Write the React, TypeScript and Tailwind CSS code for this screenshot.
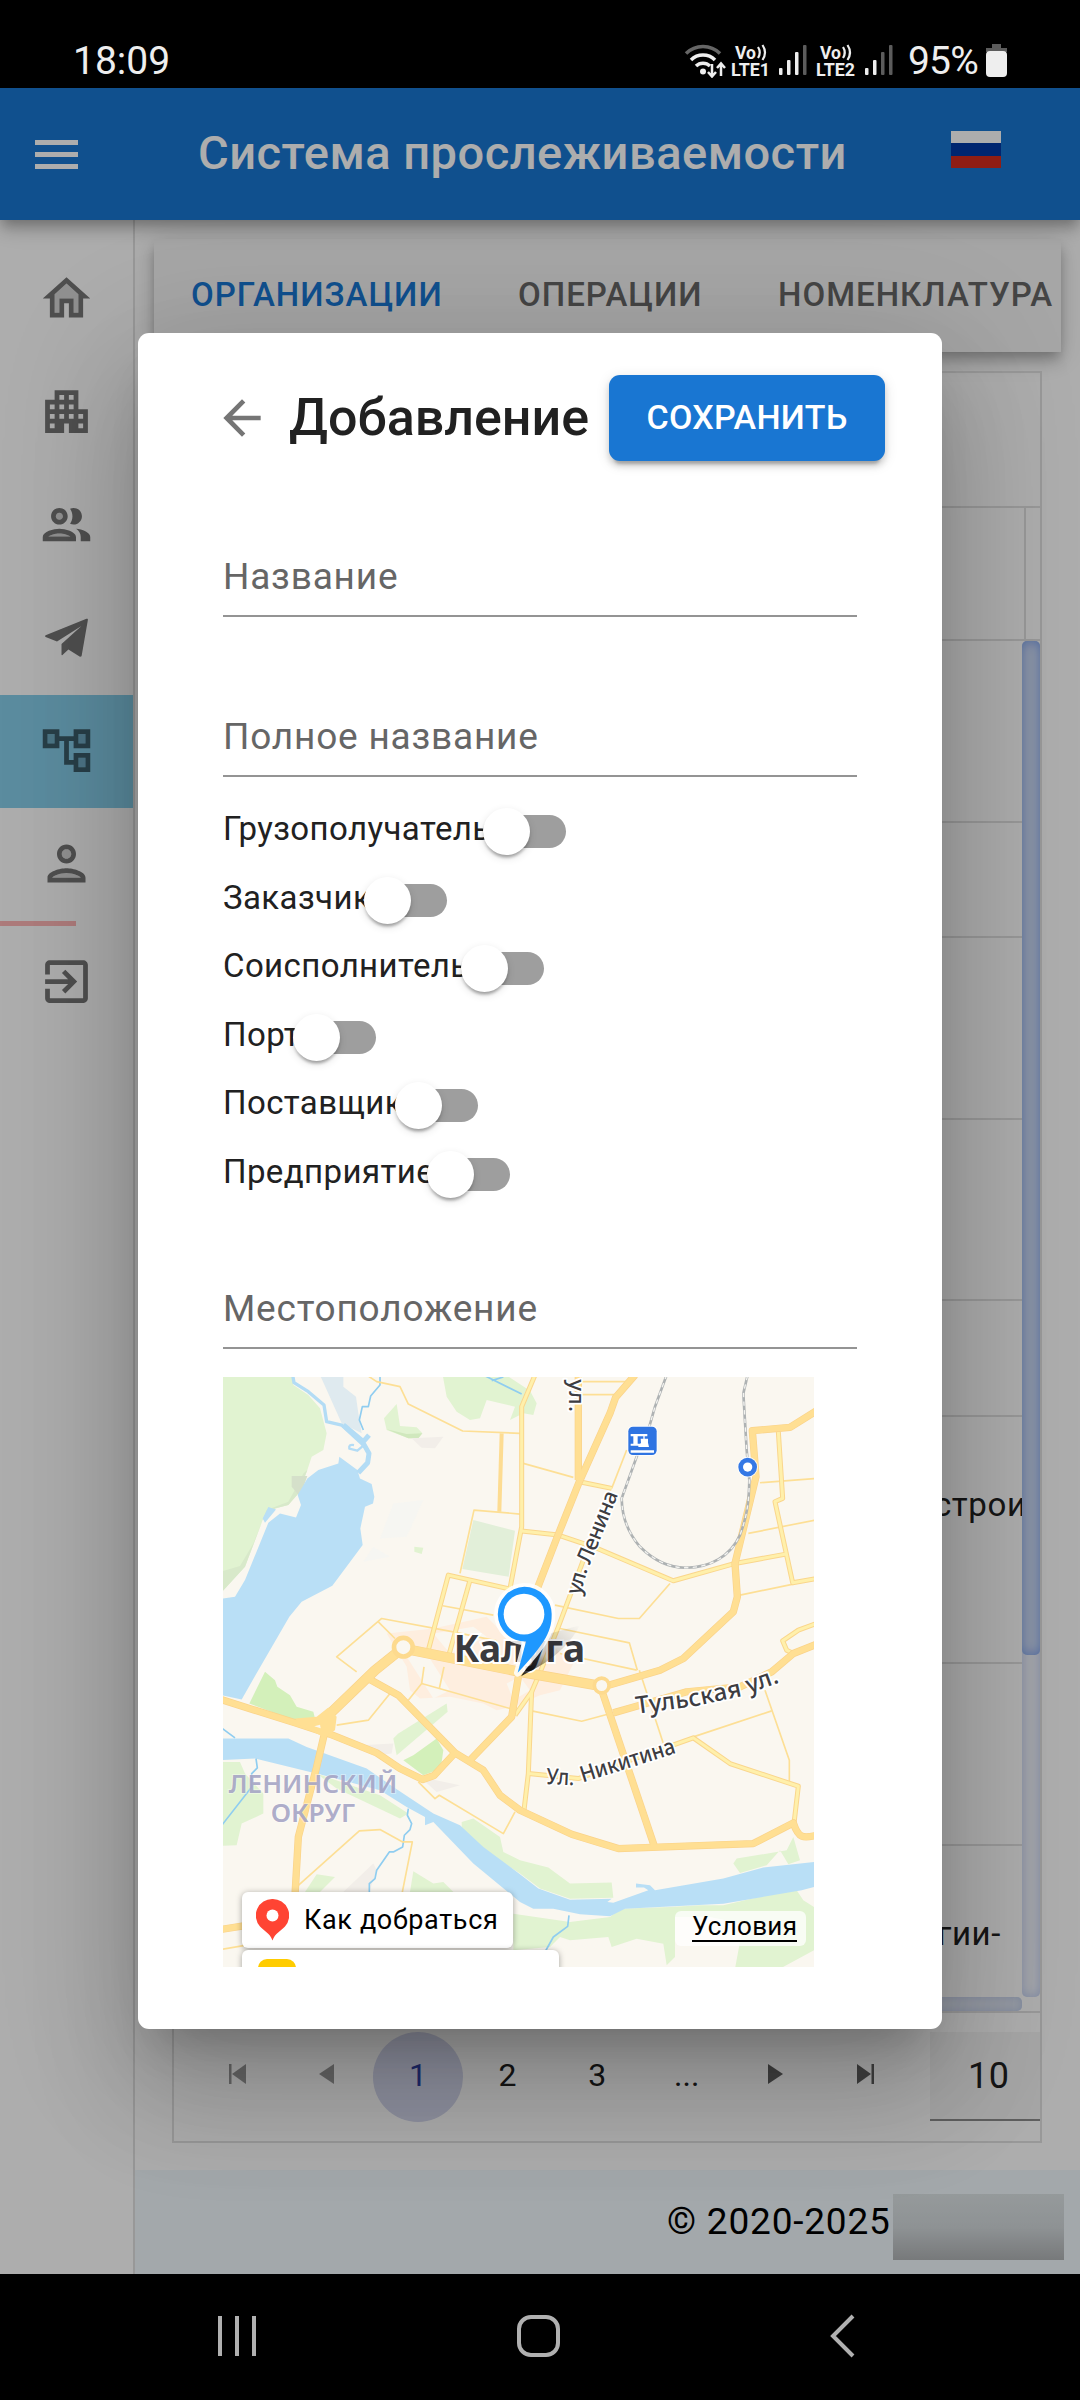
import React from "react";

const navIcons: { main: string; soft?: string; divider?: boolean; active?: boolean }[] = [
  {
    main: "M12 3L2 12h3v8h6v-6h2v6h6v-8h3L12 3zm5 15h-2v-6H9v6H7v-7.81l5-4.5 5 4.5V18z",
    soft: "M7 10.19V18h2v-6h6v6h2v-7.81l-5-4.5z",
  },
  {
    main: "M17 11V3H7v4H3v14h8v-4h2v4h8V11h-4zM7 19H5v-2h2v2zm0-4H5v-2h2v2zm0-4H5V9h2v2zm4 4H9v-2h2v2zm0-4H9V9h2v2zm0-4H9V5h2v2zm4 8h-2v-2h2v2zm0-4h-2V9h2v2zm0-4h-2V5h2v2zm4 12h-2v-2h2v2zm0-4h-2v-2h2v2z",
  },
  {
    main: "M9 13.75c-2.34 0-7 1.17-7 3.5V19h14v-1.75c0-2.33-4.66-3.5-7-3.5zM4.34 17c.84-.58 2.87-1.25 4.66-1.25s3.82.67 4.66 1.25H4.34zM9 12c1.93 0 3.5-1.57 3.5-3.5S10.93 5 9 5 5.5 6.57 5.5 8.5 7.07 12 9 12zm0-5c.83 0 1.5.67 1.5 1.5S9.83 10 9 10s-1.5-.67-1.5-1.5S8.17 7 9 7zm7.04 6.81c1.16.84 1.96 1.96 1.96 3.44V19h4v-1.75c0-2.02-3.5-3.17-5.96-3.44zM15 12c1.93 0 3.5-1.57 3.5-3.5S16.93 5 15 5c-.54 0-1.04.13-1.5.35.63.89 1 1.98 1 3.15s-.37 2.26-1 3.15c.46.22.96.35 1.5.35z",
    soft: "M4.34 17h9.32c-.84-.58-2.87-1.25-4.66-1.25S5.18 16.42 4.34 17zM10.5 8.5a1.5 1.5 0 1 0-3 0 1.5 1.5 0 0 0 3 0z",
  },
  {
    main: "M21 4.6c.1-.5-.2-.6-.6-.5L3.2 11.1c-.3.2-.3.6 0 .7L8 13.7 18.3 7.2 9.9 14.7v4.5c0 .3.2.4.4.2L12.8 17.1l4.7 2.9c.4.2.8.1.9-.4z",
  },
  {
    main: "M22 11V3h-7v3H9V3H2v8h7V8h2v10h4v3h7v-8h-7v3h-2V8h2v3h7zM7 9H4V5h3v4zm10 6h3v4h-3v-4zm0-10h3v4h-3V5z",
    soft: "M4 5h3v4H4zM17 5h3v4h-3zM17 15h3v4h-3z",
    active: true,
  },
  {
    main: "M12 12c2.21 0 4-1.79 4-4s-1.79-4-4-4-4 1.79-4 4 1.79 4 4 4zm0-6c1.1 0 2 .9 2 2s-.9 2-2 2-2-.9-2-2 .9-2 2-2zm0 8c-2.67 0-8 1.34-8 4v2h16v-2c0-2.66-5.33-4-8-4zm6 4H6.01c.2-.72 3.3-2 5.99-2s5.8 1.29 6 2z",
    soft: "M12 16c-2.69 0-5.77 1.28-6 2h12c-.2-.71-3.3-2-6-2zM14 8a2 2 0 1 0-4 0 2 2 0 0 0 4 0z",
    divider: true,
  },
  {
    main: "M10.09 15.59L11.5 17l5-5-5-5-1.41 1.41L12.67 11H3v2h9.67l-2.58 2.59zM19 3H5c-1.11 0-2 .9-2 2v4h2V5h14v14H5v-4H3v4c0 1.1.89 2 2 2h14c1.1 0 2-.9 2-2V5c0-1.1-.9-2-2-2z",
  },
];

const paperShadow =
  "shadow-[0_6px_11px_-3px_rgba(0,0,0,0.2),0_11px_14px_0_rgba(0,0,0,0.14),0_3px_28px_0_rgba(0,0,0,0.12)]";

function VoLte({ label }: { label: string }) {
  return (
    <svg
      className="overflow-visible"
      width="42"
      height="36"
      viewBox="0 0 42 36"
      fill="#eee"
      fontFamily="Roboto"
      fontWeight="700"
    >
      <text x="4" y="14.5" fontSize="17.5" textLength="21" lengthAdjust="spacingAndGlyphs">Vo</text>
      <g fill="none" stroke="#eee" strokeWidth="2.2">
        <path d="M27 3q3.5 5.5 0 11M31.5 1q5 7.5 0 15" />
      </g>
      <text x="0" y="32" fontSize="18" textLength="39" lengthAdjust="spacingAndGlyphs">{label}</text>
    </svg>
  );
}

function Signal({ level }: { level: number }) {
  return (
    <svg width="30" height="32" viewBox="0 0 30 32">
      {[7, 15, 23, 30].map((h, i) => (
        <rect key={i} x={i * 8} y={31 - h} width="3.5" height={h} rx="1" fill={i < level ? "#eee" : "#5c5c5c"} />
      ))}
    </svg>
  );
}

function StatusBar() {
  return (
    <div className="flex h-[88px] shrink-0 items-start bg-black pl-[73px] font-['Roboto'] text-[#eeeeee]">
      <div className="w-[97px] pt-[38px] text-[39px] leading-[46px]">18:09</div>
      <div className="ml-[514px] flex items-start">
        <svg className="mt-[44px]" width="44" height="34" viewBox="0 0 44 34" fill="none">
          <g strokeWidth="3.5">
            <path d="M2 9.500A24 24 0 0 1 36 9.500" stroke="#666" />
            <path d="M7 16A17 17 0 0 1 31 16" stroke="#eee" />
            <path d="M12 22A10 10 0 0 1 26 22" stroke="#eee" />
          </g>
          <circle cx="19" cy="27.5" r="3" fill="#eee" />
          <path d="M28 20v12M24 28l4 4.5 4-4.5M37 32V20M33 24l4-4.5 4 4.5" stroke="#eee" strokeWidth="2.5" />
        </svg>
        <div className="mt-[44px] ml-[3px] w-[42px]"><VoLte label="LTE1" /></div>
        <div className="mt-[44px] ml-[6px]"><Signal level={3} /></div>
        <div className="mt-[44px] ml-[7px] w-[42px]"><VoLte label="LTE2" /></div>
        <div className="mt-[44px] ml-[7px]"><Signal level={2} /></div>
        <div className="ml-[13px] w-[76px] pt-[38px] text-[39px] leading-[46px] tracking-[-0.8px]">95%</div>
        <svg className="mt-[44px] ml-[2px]" width="21" height="33" viewBox="0 0 21 33">
          <path d="M6 0h9v4h6v4H0V4h6z" fill="#5c5c5c" />
          <rect y="7" width="21" height="26" rx="4" fill="#eee" />
        </svg>
      </div>
    </div>
  );
}

function Header() {
  return (
    <header className={"relative z-10 flex h-[132px] shrink-0 items-start bg-[#1976d2] " + paperShadow}>
      <div className="mt-[52px] ml-[35px] flex w-[43px] flex-col gap-[7px]">
        <div className="h-[5px] bg-white" />
        <div className="h-[5px] bg-white" />
        <div className="h-[5px] bg-white" />
      </div>
      <h1 className="mt-[37px] ml-[120px] w-[753px] text-[47px] leading-[56px] font-medium tracking-[0.5px] whitespace-nowrap text-white">
        Система прослеживаемости
      </h1>
      <div className="mt-[43px] flex h-[37px] w-[50px] flex-col">
        <div className="flex-1 bg-white" />
        <div className="flex-1 bg-[#0039a6]" />
        <div className="flex-1 bg-[#d52b1e]" />
      </div>
    </header>
  );
}

function Sidebar() {
  return (
    <aside className="w-[135px] shrink-0 border-r-2 border-[#e0e0e0] pt-[23px]">
      {navIcons.map((it, i) => (
        <div key={i}>
          <div className={"flex h-[113px] items-center justify-center pr-[1px] pb-[2px] " + (it.active ? "bg-[#87ceeb]" : "")}>
            <svg width="57" height="57" viewBox="0 0 24 24" fill={it.active ? "#3c5d6a" : "#757575"}>
              {it.soft && <path d={it.soft} opacity="0.3" />}
              <path d={it.main} />
            </svg>
          </div>
          {it.divider && <div className="h-[5px] w-[76px] bg-[#ffb6b6]" />}
        </div>
      ))}
    </aside>
  );
}

const rows: { h: string; text?: string }[] = [
  { h: "h-[182px]" },
  { h: "h-[115px]" },
  { h: "h-[182px]" },
  { h: "h-[181px]" },
  { h: "h-[116px]" },
  { h: "h-[247px]", text: "строи" },
  { h: "h-[182px]" },
  { h: "h-[180px]", text: "гии-" },
];

const pages = ["first", "prev", "1", "2", "3", "...", "next", "last"];

function PageIcon({ kind }: { kind: string }) {
  const left = kind === "first" || kind === "prev";
  const bar = kind === "first" || kind === "last";
  return (
    <svg
      width="18"
      height="20"
      viewBox="0 0 18 20"
      className={left ? "mt-[-2px] mr-[2px]" : "mt-[-2px] mr-[2px] rotate-180"}
      fill={left ? "#9a9a9a" : "#616161"}
    >
      {bar && <rect x="0" y="0" width="2.5" height="20" />}
      <path d={bar ? "M17 0v20L3 10z" : "M16 0v20L1 10z"} />
    </svg>
  );
}

function Table() {
  return (
    <section className="mt-[19px] ml-[37px] flex h-[1772px] w-[870px] shrink-0 flex-col border-2 border-[#e0e0e0] text-[#212121]">
      <div className="h-[135px] shrink-0 border-b-2 border-[#e0e0e0]" />
      <div className="flex h-[133px] shrink-0 border-b-2 border-[#e0e0e0]">
        <div className="w-[852px] border-r-2 border-[#e0e0e0]" />
      </div>
      <div className="flex h-[1356px] shrink-0">
        <div className="w-[848px] overflow-hidden">
          {rows.map((r, i) => (
            <div key={i} className={"flex justify-end border-b-2 border-[#e0e0e0] " + r.h}>
              {r.text === "строи" && (
                <span className="mt-[70px] w-[88px] text-[33px] leading-[36px] tracking-[0.6px]">{r.text}</span>
              )}
              {r.text === "гии-" && (
                <span className="mt-[70px] mr-[21px] text-[33px] leading-[36px] tracking-[0.6px]">{r.text}</span>
              )}
            </div>
          ))}
        </div>
        <div className="h-full w-[18px] rounded-[5px] bg-[#f3f5fb] shadow-[inset_0_0_12px_#b9c9f0]">
          <div className="h-[1014px] rounded-[5px] bg-[#d8e3f6] shadow-[inset_0_0_13px_#7298ea]" />
        </div>
      </div>
      <div className="h-[14px] w-[848px] shrink-0 rounded-[5px] bg-[#dde3f0] shadow-[inset_0_0_9px_#bccbec]" />
      <div className="flex flex-1 border-t-2 border-[#e0e0e0]">
        <div className="mt-[19px] ml-[20px] flex w-[718px] text-[32px]">
          {pages.map((p) => (
            <div
              key={p}
              className={
                "flex h-[90px] w-[89.6px] shrink-0 items-center justify-center rounded-full pb-[4px] " +
                (p === "1" ? "bg-[#d4d7ee] text-[#303f9f]" : "")
              }
            >
              {p.length > 3 ? <PageIcon kind={p} /> : p}
            </div>
          ))}
        </div>
        <div className="mt-[19px] ml-[18px] flex h-[89px] flex-1 items-center border-b-2 border-[#8d8d8d] bg-[#f5f5f5] pl-[38px] text-[36px] tracking-[0.6px]">
          10
        </div>
      </div>
    </section>
  );
}

/* Map geometry uses three units per screen pixel. */
const major = [
  "M0 987L225 1058L330 1092L470 1148L540 1195L608 1228L642 1216L705 1148",
  "M450 928L535 975L705 1148L790 1200L840 1275L900 1320L1055 1392L1195 1435L1600 1420L1720 1358C1735 1405 1750 1405 1790 1395",
  "M750 1170L875 1040L895 920",
  "M325 1040L290 1190L235 1400L225 1575",
  "M1150 950L1320 900L1390 865L1540 725L1552 680L1545 580L1608 320L1597 182L1710 172L1790 122",
  "M1180 1028L1260 1005L1400 965L1560 950L1655 905L1720 850L1790 822",
  "M1075 15V330",
  "M1245 15L1187 82L1170 130L1078 335L1012 500L950 660L900 790",
  "M1140 945L1302 1425",
  "M0 1678L80 1665",
  "M320 1040L465 900L550 832",
];
const main = ["M550 835L700 865L900 905L1145 948", "M320 1040L465 900L550 832"];
const medium = [
  "M945 15L905 110L905 470L870 655",
  "M625 840L685 615L870 657",
  "M750 630L685 860",
  "M905 483L1015 495L1120 530L1360 632L1545 580L1698 552",
  "M885 1035L935 965L965 895L1015 770L1090 570",
  "M935 962L925 1210L912 1320",
  "M925 1210L1075 1225L1420 1103L1530 1180L1735 1248L1722 1360",
  "M1675 185L1688 385L1665 395L1718 638L1790 625",
  "M1790 760L1735 780L1688 812L1700 840L1720 850",
  "M1078 335L1175 355",
];
const minor = [
  "M440 15L470 35L540 50L565 102L728 183L900 190",
  "M720 610L762 420L900 432",
  "M668 707L820 735",
  "M410 905L350 860L485 745L700 785L830 812",
  "M475 755L525 805",
  "M910 280L1060 322",
  "M1175 355L1220 240",
  "M1085 35H1225M1085 74H1190",
  "M1005 705L1195 745H1258L1350 640",
  "M1020 775L1228 818L1252 900",
  "M1020 850L1250 900",
  "M1620 338L1790 325",
  "M1585 490L1790 449",
  "M1560 675L1720 642",
  "M935 1022L1085 1053L1160 1033",
  "M1420 1100L1655 1022",
  "M1635 960L1708 1170V1238",
  "M1258 900L1330 1120",
  "M350 1065L445 1050L510 970",
  "M605 940L870 1015",
  "M612 890L605 940L565 990M672 890L658 955",
  "M235 1545L418 1382L480 1378L548 1415H577L545 1575",
  "M595 1235L645 1285L658 1275L850 1390L885 1325",
  "M0 1738L75 1725",
];
const greens = [
  "M0 15H215L220 45L265 75L300 115L320 190L310 240L275 260L262 300L235 370L205 405L165 415L128 450L75 590L0 672Z",
  "M668 15H858L930 62L950 100L940 135L910 130L870 150L885 110L800 90L780 145L750 150L710 125L680 80Z",
  "M492 145L530 102L540 168L590 172L607 190L595 205H565L500 180Z",
  "M583 530L610 533L605 552L583 545Z",
  "M520 1105L535 1090L680 1000L683 1025L530 1155Z",
  "M0 1175H60L75 1210L130 1270V1330L65 1360L50 1425L0 1427Z",
  "M290 1210L480 1275L565 1330L540 1345L350 1255Z",
  "M725 1355L760 1345L840 1400L850 1445L900 1470L985 1492L1050 1540L1175 1537L1180 1582L1050 1585L960 1555L900 1510L800 1445L725 1380Z",
  "M290 1512L345 1520L300 1565H255Z",
  "M580 1503L640 1540L670 1535L700 1565H570Z",
  "M880 1630L1050 1655L1170 1640L1200 1615L1350 1610L1440 1605L1510 1605L1660 1570L1730 1560L1750 1590L1782 1610V1740L1680 1795H1545L1570 1660L1470 1640L1365 1640V1760L1340 1785L1330 1720L1250 1705L1175 1730L1165 1700L1050 1710L1020 1700L990 1730L880 1740Z",
  "M1540 1480L1550 1465L1700 1440L1720 1400L1740 1470L1705 1482L1680 1440L1640 1485L1560 1508Z",
];

const railway =
  "M1340 15L1305 110L1285 180L1250 260L1205 385C1206 440 1225 490 1260 530C1300 570 1350 594 1400 593C1470 592 1530 560 1560 495C1580 440 1587 400 1588 330L1580 240L1570 70L1583 15";

function CityMap() {
  return (
    <svg
      className="block"
      width="591"
      height="590"
      viewBox="9 21 1773 1769"
      preserveAspectRatio="none"
      fontFamily="'Noto Sans'"
    >
      <rect x="0" y="0" width="1800" height="1800" fill="#faf7f0" />
      <g fill="#e1f3d1">
        {greens.map((d) => (
          <path key={d} d={d} />
        ))}
      </g>
      <path d="M0 605L60 588L100 520L140 420L205 395L235 340L250 310L262 300L235 370L205 405L165 415L128 450L75 590L0 672Z" fill="#d8e9ca" />
      <path d="M88 1000L135 905L165 930L172 950L210 975L230 1010L280 1025L285 1045L220 1050ZM550 1170L580 1155L650 1105L670 1140L665 1175L650 1200L610 1215Z" fill="#d3f0ba" />
      <path d="M500 178L560 192L607 190L595 205H565Z" fill="#d0e8bd" />
      <path d="M760 450L885 482L866 620L727 597Z" fill="#e2efd9" />
      <path d="M215 318H262L240 380L215 350Z" fill="#d5e0ca" />
      <path d="M575 205L670 200L645 235L605 233ZM420 1125L520 1120L515 1150L470 1155ZM600 1220L720 1245L650 1265ZM370 1565L460 1480L470 1500L448 1565Z" fill="#f2eee9" />
      <path d="M500 790L640 775L800 740L860 800L1000 830L1060 880L1020 960L960 975L880 1010L830 1020L790 1000L690 980L600 985L570 960L560 890Z" fill="#feeedf" />
      <path d="M560 860L620 850L690 960L640 985ZM860 940L900 920L930 960L880 990ZM640 790L760 770L800 800L690 850Z" fill="#faf7f0" />
      <path d="M520 400L610 390L560 500L480 505ZM430 575L460 530L510 560Z" fill="#f6f6f2" />
      <path d="M300 15H370V50L408 80L415 130L425 190L365 160Z" fill="#dfeaef" />
      <g fill="#b9dff6">
        <path d="M0 686L45 680L75 630L145 458L180 430L228 442L243 405L233 375L262 325L295 300L355 280L358 260L412 300L420 325L455 342L463 380L459 400L435 410L421 475L428 525L337 647L245 695L208 740L115 900L65 988L0 974Z" />
        <path d="M128 445L145 411L168 418L135 458Z" />
        <path d="M0 1105H205L260 1130L440 1195L520 1250L640 1330L720 1365L790 1430L900 1512L955 1555L1050 1588L1175 1585L1162 1595L1180 1597L1285 1560L1272 1552H1248V1540L1290 1545L1305 1560L1510 1525L1630 1492L1790 1474V1548L1745 1560L1510 1600L1215 1615L1170 1638L1080 1632L1000 1615H940L900 1595L760 1480L640 1355L615 1365V1340L560 1310L480 1260L310 1215L200 1188L105 1165L0 1170Z" />
      </g>
      <g fill="none" stroke="#b3dcf5" strokeLinejoin="round">
        <path d="M218 15L222 38L265 65L312 105L320 155L365 165L430 225" strokeWidth="10" />
        <path d="M370 165L430 215L447 195M430 220L447 250L443 278L415 308" strokeWidth="15" />
        <path d="M402 225Q385 222 388 236L412 242L432 225" strokeWidth="7" />
      </g>
      <g fill="none" stroke="#8fcdf0" strokeWidth="5" strokeLinejoin="round">
        <path d="M480 15V45L452 78L445 110H427L418 150L430 180" />
        <path d="M790 15L905 72M815 32L850 21" />
        <path d="M108 1165L112 1193L95 1210V1250L0 1372M0 1070L45 1103" />
        <path d="M565 1315L562 1335L575 1360L570 1378L553 1395L548 1430L520 1445H508L470 1500L465 1525L448 1540V1575" />
        <path d="M1047 1635L1043 1668L1000 1700L975 1745" />
      </g>

      <g fill="none" strokeLinejoin="round">
        {minor.map((d) => (
          <path key={d} d={d} stroke="#fddf95" strokeWidth="5" />
        ))}
        <path d="M845 190L838 425" stroke="#fddc92" strokeWidth="12" />
        {medium.map((d) => (
          <path key={d} d={d} stroke="#fad68c" strokeWidth="15" />
        ))}
        {medium.map((d) => (
          <path key={d} d={d} stroke="#fff0ab" strokeWidth="9" />
        ))}
        {major.map((d) => (
          <path key={d} d={d} stroke="#fad38a" strokeWidth="22" />
        ))}
        {main.map((d) => (
          <path key={d} d={d} stroke="#fad38a" strokeWidth="31" />
        ))}
        {major.map((d) => (
          <path key={d} d={d} stroke="#ffdf93" strokeWidth="18" />
        ))}
        {main.map((d) => (
          <path key={d} d={d} stroke="#ffdf93" strokeWidth="27" />
        ))}
      </g>
      <path d="M225 1045L290 1040L325 1012L350 1040L345 1080L310 1100L240 1065Z" fill="#ffdf93" />
      <path d="M283 1068L300 1064L302 1074Z" fill="#faf7f0" />
      <circle cx="550" cy="831" r="28" fill="#faf7f0" stroke="#fdda8e" strokeWidth="14" />
      <circle cx="1145" cy="946" r="22" fill="#faf7f0" stroke="#fdda8e" strokeWidth="11" />

      <g fill="none">
        <path d={railway} stroke="#aeb2b3" strokeWidth="8" />
        <path d={railway} stroke="#f3f3f0" strokeWidth="4" strokeDasharray="13 13" />
      </g>

      <rect x="1222" y="167" width="91" height="91" rx="17" fill="#fff" opacity="0.8" />
      <rect x="1225" y="170" width="85" height="85" rx="14" fill="#2f74e2" />
      <path d="M1232 192h50v7h-8v22h-4v-22h-17v22h8v6h-29v-6h8v-22h-8zM1262 206h22v12l3 13h-32v-6l8-6zM1232 241h70v7h-70z" fill="#fff" />
      <circle cx="1583" cy="291" r="31" fill="#fff" opacity="0.8" />
      <circle cx="1583" cy="291" r="28" fill="#3478e5" />
      <circle cx="1583" cy="291" r="14" fill="#fff" />

      <defs>
        <path id="lenina" d="M1080 677L1104 595L1128 540L1210 335" />
        <path id="tulskaya" d="M1250 1031L1420 1009L1560 979L1600 965L1735 917" />
        <linearGradient id="pinShadow" x1="0" y1="1" x2="1" y2="0">
          <stop offset="0" stopColor="#000" stopOpacity="0.9" />
          <stop offset="0.4" stopColor="#000" stopOpacity="0.22" />
          <stop offset="1" stopColor="#000" stopOpacity="0" />
        </linearGradient>
      </defs>

      <g fill="#3d3d42" stroke="#fff" strokeWidth="11" strokeLinejoin="round" paintOrder="stroke" fontWeight="500">
        <text fontSize="64">
          <textPath href="#lenina" textLength="326">ул. Ленина</textPath>
        </text>
        <text fontSize="72">
          <textPath href="#tulskaya" textLength="442">Тульская ул.</textPath>
        </text>
        <text transform="translate(978 1241) rotate(3)" fontSize="67" textLength="84" lengthAdjust="spacingAndGlyphs">Ул.</text>
        <text transform="translate(1088 1237) rotate(-17.5)" fontSize="67" textLength="296" lengthAdjust="spacingAndGlyphs">Никитина</text>
        <text transform="translate(1048 28) rotate(90)" fontSize="67" textLength="98">ул.</text>
      </g>
      <g fill="#a4a3c4" stroke="#fff" strokeOpacity="0.35" strokeWidth="6" paintOrder="stroke" fontWeight="600" fontSize="77" fillOpacity="0.9">
        <text x="26" y="1267" textLength="506" lengthAdjust="spacingAndGlyphs">ЛЕНИНСКИЙ</text>
        <text x="152" y="1355" textLength="254" lengthAdjust="spacingAndGlyphs">ОКРУГ</text>
      </g>
      <text x="701" y="877" fontSize="115" fontWeight="700" fill="#3a3a3e" stroke="#fff" strokeWidth="12" paintOrder="stroke" textLength="394" lengthAdjust="spacingAndGlyphs">
        Калуга
      </text>

      <path d="M903 918L990 790L1080 765Q1040 840 955 890Z" fill="url(#pinShadow)" />
      <path d="M913 650A82 82 0 0 1 995 735C995 790 965 830 893 908L918 814A82 82 0 1 1 913 650Z" fill="#1e98ff" stroke="#fff" strokeOpacity="0.85" strokeWidth="22" paintOrder="stroke" strokeLinejoin="round" />
      <circle cx="912" cy="732" r="61" fill="#fff" />
    </svg>
  );
}

function Field({ label, className }: { label: string; className: string }) {
  return (
    <div
      className={
        "flex w-[634px] items-start border-b-2 border-[#949494] pt-[1px] text-[37px] leading-[44px] tracking-[0.8px] text-[#666666] " +
        className
      }
    >
      {label}
    </div>
  );
}

const switches = [
  { label: "Грузополучатель", w: "w-[260px]" },
  { label: "Заказчик", w: "w-[141px]" },
  { label: "Соисполнитель", w: "w-[238px]" },
  { label: "Порт", w: "w-[70px]" },
  { label: "Поставщик", w: "w-[172px]" },
  { label: "Предприятие", w: "w-[204px]" },
];

function Dialog() {
  return (
    <div className="relative flex h-[1696px] w-[804px] flex-col rounded-[11px] bg-white pl-[85px] shadow-[0_31px_42px_-20px_rgba(0,0,0,0.2),0_67px_107px_8px_rgba(0,0,0,0.14),0_25px_129px_22px_rgba(0,0,0,0.12)]">
      <div className="flex h-[128px] items-start">
        <svg className="mt-[57px] ml-[-9px]" width="56" height="56" viewBox="0 0 24 24" fill="#757575">
          <path d="M20 11H7.83l5.59-5.59L12 4l-8 8 8 8 1.41-1.41L7.83 13H20v-2z" />
        </svg>
        <h2 className="mt-[55px] ml-[19px] w-[320px] text-[52px] leading-[60px] font-medium whitespace-nowrap text-[#212121]">
          Добавление
        </h2>
        <button className="mt-[42px] flex h-[86px] w-[276px] items-center justify-center rounded-[11px] bg-[#1976d2] pb-[2px] text-[34px] font-medium tracking-[0.3px] text-white shadow-[0_8px_3px_-5px_rgba(0,0,0,0.2),0_5px_6px_0_rgba(0,0,0,0.14),0_3px_14px_0_rgba(0,0,0,0.12)]">
          СОХРАНИТЬ
        </button>
      </div>
      <Field label="Название" className="mt-[93px] h-[63px]" />
      <Field label="Полное название" className="mt-[97px] h-[63px]" />
      <div className="mt-[20px] flex flex-col">
        {switches.map((s) => (
          <div key={s.label} className="flex h-[68.5px] items-start">
            <span className={"mt-[13px] text-[33px] leading-[38px] tracking-[0.4px] whitespace-nowrap text-[#212121] " + s.w}>
              {s.label}
            </span>
            <div className="relative mt-[18px] h-[33px] w-[83px] rounded-full bg-[#9e9e9e]">
              <div className="absolute top-[-7px] left-0 h-[47px] w-[47px] rounded-full bg-white shadow-[0_5px_3px_-3px_rgba(0,0,0,0.2),0_3px_3px_0_rgba(0,0,0,0.14),0_3px_8px_0_rgba(0,0,0,0.12)]" />
            </div>
          </div>
        ))}
      </div>
      <Field label="Местоположение" className="mt-[78px] h-[63px]" />
      <div className="relative mt-[28px] h-[590px] w-[591px] overflow-hidden">
        <CityMap />
        <div className="absolute top-[515px] left-[19px] flex h-[56px] w-[271px] items-center rounded-[6px] bg-white pl-[14px] shadow-[0_1px_6px_rgba(0,0,0,0.35)]">
          <svg width="33" height="42" viewBox="0 0 33 42">
            <path d="M16.5 0A16.5 16.5 0 0 1 29 27.5C25 32 19 34 16.5 41.5C14 34 8 32 4 27.5A16.5 16.5 0 0 1 16.5 0z" fill="#ff4433" />
            <circle cx="16.5" cy="16.5" r="6" fill="#fff" />
          </svg>
          <span className="ml-[15px] text-[27px] leading-[32px] tracking-[0.65px] whitespace-nowrap text-black">Как добраться</span>
        </div>
        <div className="absolute top-[573px] left-[19px] h-[56px] w-[317px] rounded-[6px] bg-white pt-[9px] pl-[16px] shadow-[0_1px_6px_rgba(0,0,0,0.35)]">
          <div className="h-[38px] w-[38px] rounded-[9px] bg-[#ffcc00]" />
        </div>
        <div className="absolute top-[534px] left-[452px] flex h-[35px] w-[131px] items-center rounded-[6px] bg-white/75 pb-[2px] pl-[17px] text-[26px] tracking-[0.3px] text-black">
          <span className="border-b-2 border-black leading-[27px]">Условия</span>
        </div>
      </div>
    </div>
  );
}

export default function App() {
  return (
    <div className="flex h-[2400px] w-[1080px] flex-col overflow-hidden bg-black font-['Roboto',sans-serif]">
      <StatusBar />
      <div className="relative flex h-[2186px] shrink-0 flex-col overflow-hidden bg-white">
        <Header />
        <div className="flex flex-1">
          <Sidebar />
          <main className="flex w-[945px] flex-col overflow-hidden">
            <nav
              className={
                "mt-[19px] ml-[19px] flex h-[113px] w-[907px] shrink-0 items-start bg-[#f5f5f5] pt-[34px] pl-[37px] text-[33px] leading-[44px] font-medium tracking-[1px] whitespace-nowrap text-[#666666] " +
                paperShadow
              }
            >
              <span className="w-[327px] text-[#1976d2]">ОРГАНИЗАЦИИ</span>
              <span className="w-[260px]">ОПЕРАЦИИ</span>
              <span>НОМЕНКЛАТУРА</span>
            </nav>
            <Table />
            <footer className="mt-[27px] flex h-[104px] shrink-0 items-start bg-[#f0f8fc] pl-[532px]">
              <span className="mt-[32px] w-[226px] text-[37px] leading-[40px] tracking-[0.8px] whitespace-nowrap text-black">© 2020-2025</span>
              <div className="mt-[24px] h-[66px] w-[171px] bg-linear-to-b from-[#dce3e5] via-[#d2d8db] to-[#b0b3b5]" />
            </footer>
          </main>
        </div>
        <div className="absolute inset-0 z-20 flex items-center justify-center bg-black/32">
          <Dialog />
        </div>
      </div>
      <div className="flex h-[126px] shrink-0 items-center bg-black">
        <svg width="1080" height="60" viewBox="0 2306 1080 60" fill="none" stroke="#b0b0b0" strokeWidth="4">
          <path d="M220 2315v40M237 2315v40M254 2315v40" />
          <rect x="519" y="2316" width="39" height="38" rx="12" />
          <path d="M853 2315L833 2335L853 2355" />
        </svg>
      </div>
    </div>
  );
}
